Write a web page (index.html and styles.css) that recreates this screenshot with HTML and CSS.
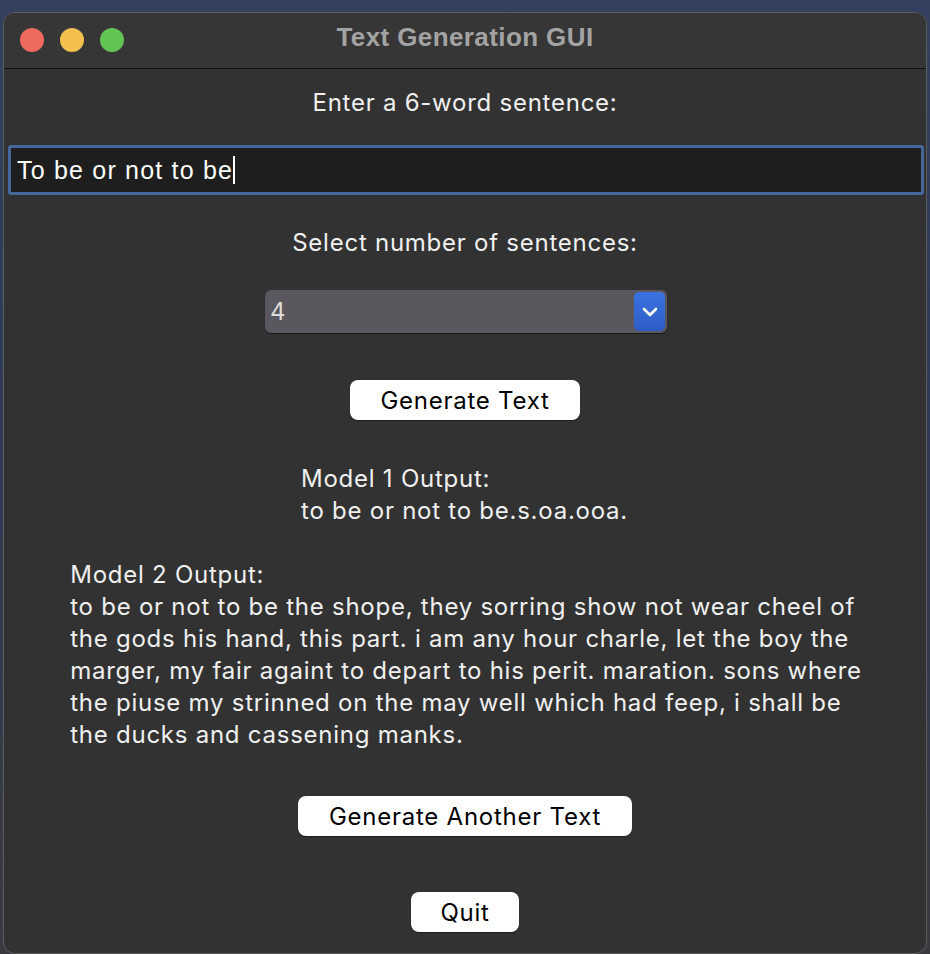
FILE: index.html
```html
<!DOCTYPE html>
<html>
<head>
<meta charset="utf-8">
<link rel="stylesheet" href="styles.css">
<title>Text Generation GUI</title>
</head>
<body>
<div class="window">
  <div class="titlebar">
    <div class="lights">
      <span class="light red"></span>
      <span class="light yellow"></span>
      <span class="light green"></span>
    </div>
    <div class="title">Text Generation GUI</div>
  </div>
  <div class="content">
    <div class="label label-enter">Enter a 6-word sentence:</div>
    <div class="entry"><span class="entry-text">To be or not to be</span><span class="caret"></span></div>
    <div class="label label-select">Select number of sentences:</div>
    <div class="combo">
      <span class="combo-value">4</span>
      <span class="combo-btn">
        <svg width="16" height="10" viewBox="0 0 16 10"><path d="M2 2 L8 8 L14 2" fill="none" stroke="#ffffff" stroke-width="2.6" stroke-linecap="round" stroke-linejoin="round"/></svg>
      </span>
    </div>
    <button class="btn btn-generate">Generate Text</button>
    <div class="output output-1">Model 1 Output:<br>to be or not to be.s.oa.ooa.</div>
    <div class="output output-2">Model 2 Output:<br>to be or not to be the shope, they sorring show not wear cheel of<br>the gods his hand, this part. i am any hour charle, let the boy the<br>marger, my fair againt to depart to his perit. maration. sons where<br>the piuse my strinned on the may well which had feep, i shall be<br>the ducks and cassening manks.</div>
    <button class="btn btn-another">Generate Another Text</button>
    <button class="btn btn-quit">Quit</button>
  </div>
</div>
</body>
</html>
```

FILE: styles.css
```css
html, body {
  margin: 0;
  padding: 0;
  height: 954px;
  overflow: hidden;
}
body {
  background: linear-gradient(180deg, #33405f 0%, #2e3a58 40%, #3a3a40 100%);
  font-family: Inter, "Noto Sans", sans-serif;
}
.window {
  margin: 12px 3px 0 3px;
  height: 942px;
  border-radius: 12px;
  background: #323232;
  border: 1px solid #5e5e5e;
  box-sizing: border-box;
  overflow: hidden;
  display: flex;
  flex-direction: column;
}
.titlebar {
  height: 55px;
  background: #363636;
  border-bottom: 1px solid #111111;
  position: relative;
  display: flex;
  align-items: center;
  justify-content: center;
  flex-shrink: 0;
}
.lights {
  position: absolute;
  left: 16px;
  top: 15px;
  display: flex;
  gap: 16px;
}
.light {
  width: 24px;
  height: 24px;
  border-radius: 50%;
  display: block;
}
.red { background: #ed6a5e; }
.yellow { background: #f5bf4f; }
.green { background: #61c554; }
.title {
  font-family: "Liberation Sans", Arial, sans-serif;
  font-weight: bold;
  font-size: 26px;
  color: #a3a3a3;
  margin-top: -7px;
  letter-spacing: 0.4px;
}
.content {
  display: flex;
  flex-direction: column;
  align-items: center;
  color: #f0f0f0;
  font-size: 24px;
  line-height: 32px;
  letter-spacing: 0.75px;
  padding-top: 18px;
}
.label {
  text-align: center;
}
.entry {
  align-self: stretch;
  margin: 26px 2px 0 4px;
  height: 50px;
  box-sizing: border-box;
  border: 3px solid #46679a;
  border-radius: 3px;
  background: #1e1e1e;
  display: flex;
  align-items: center;
  padding-left: 6px;
  font-family: "Liberation Sans", Arial, sans-serif;
  font-size: 25px;
  letter-spacing: 1.2px;
  color: #ffffff;
}
.caret {
  display: inline-block;
  width: 2px;
  height: 28px;
  background: #ffffff;
  margin-left: 0;
}
.label-select {
  margin-top: 32px;
}
.combo {
  margin-top: 31px;
  width: 402px;
  height: 43px;
  box-sizing: border-box;
  background: #5a575e;
  border-radius: 6px;
  box-shadow: 0 1px 1px rgba(0,0,0,0.5);
  display: flex;
  align-items: center;
  justify-content: space-between;
  padding: 0 2px 0 5px;
  margin-left: 2px;
}
.combo-value {
  color: #dcdcdc;
  font-size: 24px;
}
.combo-btn {
  width: 31px;
  height: 39px;
  border-radius: 5px;
  background: linear-gradient(180deg, #3a73e0 0%, #2e5cc7 100%);
  display: flex;
  align-items: center;
  justify-content: center;
}
.btn {
  font-family: Inter, "Noto Sans", sans-serif;
  font-size: 24px;
  letter-spacing: 0.75px;
  color: #000000;
  background: #ffffff;
  border: none;
  border-radius: 8px;
  height: 40px;
  padding: 0;
  box-shadow: 0 1px 1px rgba(0,0,0,0.4);
}
.btn-generate {
  margin-top: 47px;
  width: 230px;
}
.output {
  text-align: left;
  white-space: nowrap;
}
.output-1 {
  margin-top: 43px;
  margin-right: 1px;
}
.output-2 {
  margin-top: 32px;
  margin-left: 2px;
}
.btn-another {
  margin-top: 45px;
  width: 334px;
}
.btn-quit {
  margin-top: 56px;
  width: 108px;
}
```
